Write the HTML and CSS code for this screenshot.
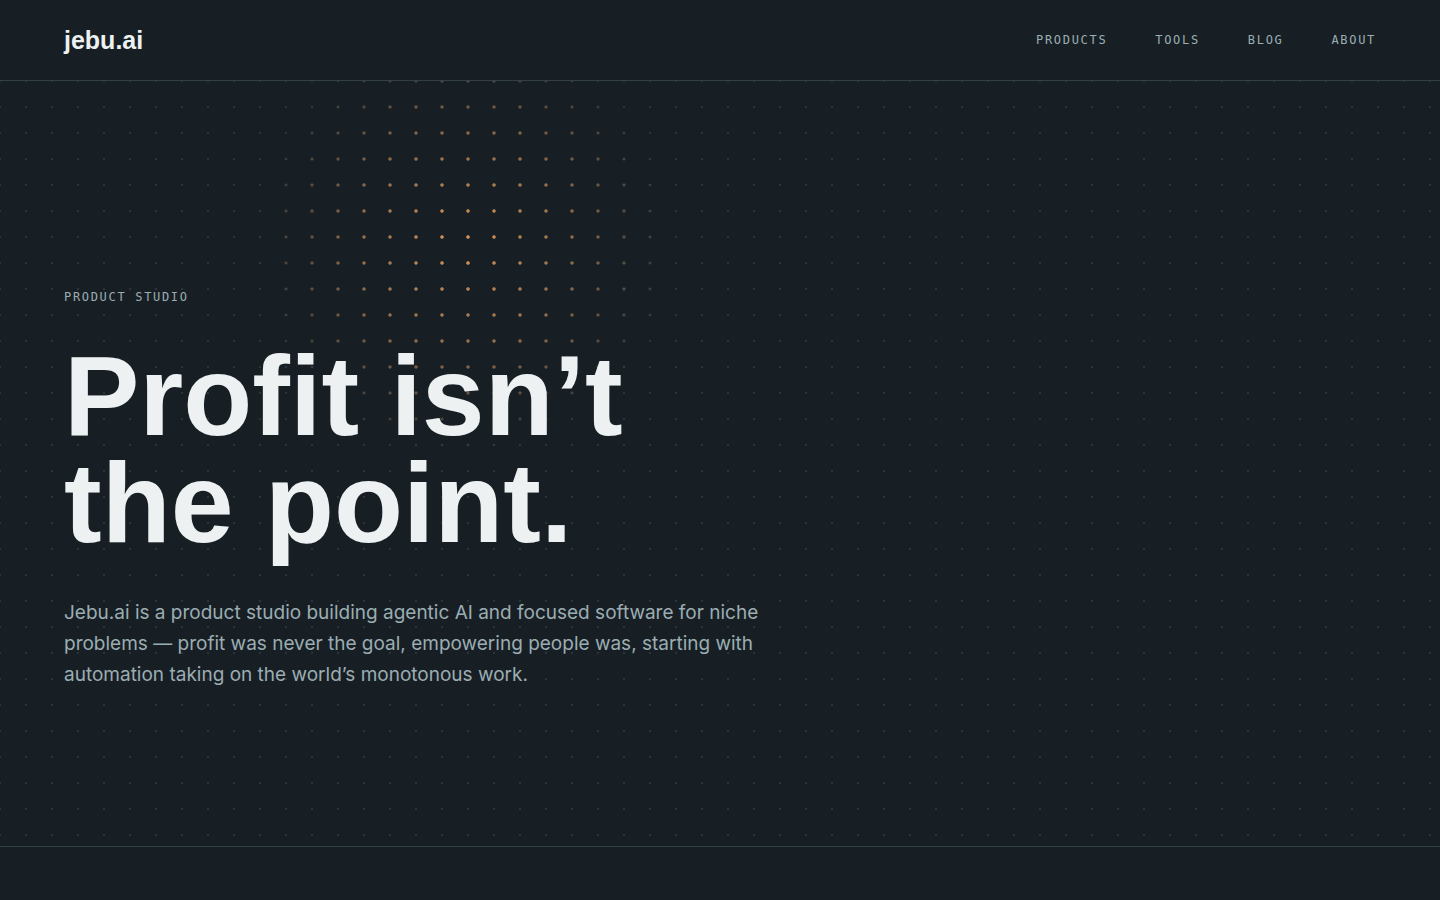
FILE: index.html
```html
<!DOCTYPE html>
<html lang="en">
<head>
<meta charset="utf-8">
<meta name="viewport" content="width=device-width, initial-scale=1">
<title>jebu.ai</title>
<link rel="stylesheet" href="styles.css">
</head>
<body>
<header class="site-header">
  <a class="logo" href="#">jebu.ai</a>
  <nav class="site-nav" aria-label="Main">
    <a href="#products">Products</a>
    <a href="#tools">Tools</a>
    <a href="#blog">Blog</a>
    <a href="#about">About</a>
  </nav>
</header>
<main>
  <section class="hero">
    <div class="hero-content">
      <p class="eyebrow">Product studio</p>
      <h1 class="headline">Profit isn’t<br>the point.</h1>
      <p class="lede">Jebu.ai is a product studio building agentic AI and focused software for niche problems — profit was never the goal, empowering people was, starting with automation taking on the world’s monotonous work.</p>
    </div>
  </section>
  <section class="products" id="products"></section>
</main>
</body>
</html>
```
FILE: styles.css
```css
:root {
  --bg: #171f25;
  --line: #324047;
  --text: #edf1f2;
  --muted: #9badb2;
  --dot: #2b343b;
  --accent: #d4935a;
}

* {
  box-sizing: border-box;
}

body {
  margin: 0;
  background: var(--bg);
  color: var(--text);
  font-family: Inter, "Liberation Sans", sans-serif;
}

a {
  color: inherit;
  text-decoration: none;
}

.site-header {
  display: flex;
  align-items: center;
  justify-content: space-between;
  height: 81px;
  padding: 0 64px;
  border-bottom: 1px solid var(--line);
}

.logo,
.headline {
  font-family: "Liberation Sans", Arial, sans-serif;
  font-weight: 700;
}

.logo {
  font-size: 25px;
}

.site-nav {
  display: flex;
  gap: 48px;
}

.site-nav a,
.eyebrow {
  color: var(--muted);
  font-family: "DejaVu Sans Mono", monospace;
  font-size: 12px;
  line-height: 20px;
  letter-spacing: 0.14em;
  text-transform: uppercase;
}

.hero {
  position: relative;
  display: flex;
  flex-direction: column;
  justify-content: flex-end;
  min-height: 85vh;
  padding: 96px 64px 156px;
  background: radial-gradient(circle, var(--dot) 1px, transparent 1.5px) -13px -13px / 26px 26px;
}

/* Warm glow over part of the dot grid */
.hero::before {
  content: "";
  position: absolute;
  inset: 0;
  background: radial-gradient(circle, var(--accent) 1.3px, transparent 2.2px) -13px -13px / 26px 26px;
  -webkit-mask-image: radial-gradient(circle 210px at 464px 164px, #000 5%, rgb(0 0 0 / 0.6) 50%, transparent);
  mask-image: radial-gradient(circle 210px at 464px 164px, #000 5%, rgb(0 0 0 / 0.6) 50%, transparent);
}

.hero-content {
  position: relative;
}

.eyebrow {
  margin: 0 0 36px;
}

.headline {
  margin: 0 0 40px;
  font-size: 113px;
  line-height: 107px;
}

.lede {
  max-width: 704px;
  margin: 0;
  color: var(--muted);
  font-size: 19px;
  line-height: 31px;
}

.products {
  min-height: 54px;
  border-top: 1px solid var(--line);
}
```
